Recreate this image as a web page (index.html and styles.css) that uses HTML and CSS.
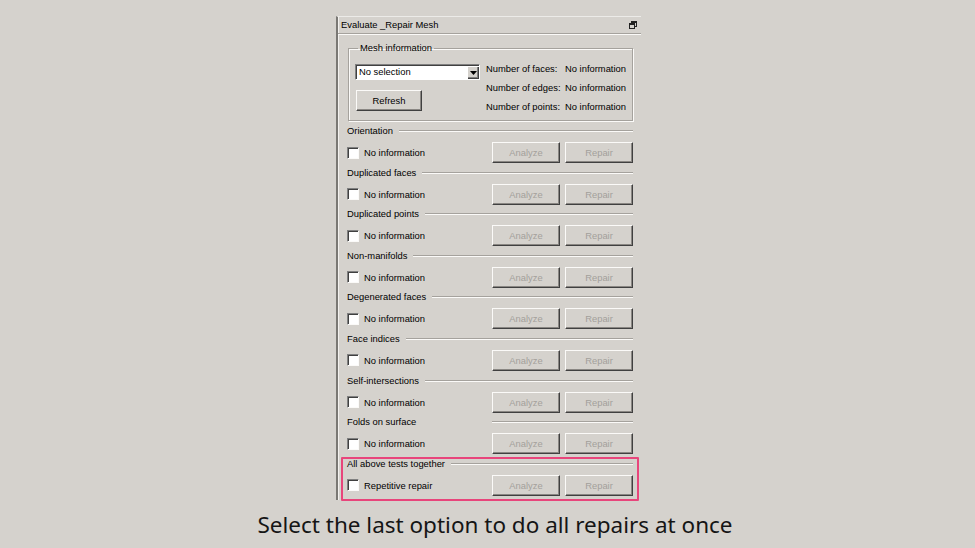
FILE: index.html
```html
<!DOCTYPE html>
<html lang="en">
<head>
    <meta charset="UTF-8">
    <meta name="viewport" content="width=device-width, initial-scale=1.0">
    <title>Evaluate Repair Mesh</title>
    <link rel="stylesheet" href="styles.css">
</head>
<body>
    <div class="panel">
        <div class="panel-title">
            <span>Evaluate _Repair Mesh</span>
            <svg class="restore-icon" width="8" height="8" viewBox="0 0 8 8">
                <rect x="2.5" y="0.5" width="5" height="5" fill="none" stroke="#222"/>
                <rect x="2.5" y="0.5" width="5" height="1.5" fill="#222"/>
                <rect x="0.5" y="2.5" width="5" height="5" fill="#d5d2cd" stroke="#222"/>
                <rect x="0.5" y="2.5" width="5" height="1.5" fill="#222"/>
            </svg>
        </div>

        <div class="panel-body">
            <fieldset class="group">
                <legend>Mesh information</legend>
                <div class="mesh-info">
                    <div class="mesh-left">
                        <div class="combo">
                            <span class="combo-text">No selection</span>
                            <span class="combo-arrow">
                                <svg width="7" height="4" viewBox="0 0 7 4"><path d="M0 0h7L3.5 4z" fill="#000"/></svg>
                            </span>
                        </div>
                        <button class="btn btn-refresh">Refresh</button>
                    </div>
                    <div class="mesh-stats">
                        <span>Number of faces:</span><span>No information</span>
                        <span>Number of edges:</span><span>No information</span>
                        <span>Number of points:</span><span>No information</span>
                    </div>
                </div>
            </fieldset>

            <div class="section">
                <div class="section-label"><span>Orientation</span><i class="rule"></i></div>
                <div class="section-row">
                    <label class="check"><span class="box"></span>No information</label>
                    <button class="btn" disabled>Analyze</button>
                    <button class="btn" disabled>Repair</button>
                </div>
            </div>

            <div class="section">
                <div class="section-label"><span>Duplicated faces</span><i class="rule"></i></div>
                <div class="section-row">
                    <label class="check"><span class="box"></span>No information</label>
                    <button class="btn" disabled>Analyze</button>
                    <button class="btn" disabled>Repair</button>
                </div>
            </div>

            <div class="section">
                <div class="section-label"><span>Duplicated points</span><i class="rule"></i></div>
                <div class="section-row">
                    <label class="check"><span class="box"></span>No information</label>
                    <button class="btn" disabled>Analyze</button>
                    <button class="btn" disabled>Repair</button>
                </div>
            </div>

            <div class="section">
                <div class="section-label"><span>Non-manifolds</span><i class="rule"></i></div>
                <div class="section-row">
                    <label class="check"><span class="box"></span>No information</label>
                    <button class="btn" disabled>Analyze</button>
                    <button class="btn" disabled>Repair</button>
                </div>
            </div>

            <div class="section">
                <div class="section-label"><span>Degenerated faces</span><i class="rule"></i></div>
                <div class="section-row">
                    <label class="check"><span class="box"></span>No information</label>
                    <button class="btn" disabled>Analyze</button>
                    <button class="btn" disabled>Repair</button>
                </div>
            </div>

            <div class="section">
                <div class="section-label"><span>Face indices</span><i class="rule"></i></div>
                <div class="section-row">
                    <label class="check"><span class="box"></span>No information</label>
                    <button class="btn" disabled>Analyze</button>
                    <button class="btn" disabled>Repair</button>
                </div>
            </div>

            <div class="section">
                <div class="section-label"><span>Self-intersections</span><i class="rule"></i></div>
                <div class="section-row">
                    <label class="check"><span class="box"></span>No information</label>
                    <button class="btn" disabled>Analyze</button>
                    <button class="btn" disabled>Repair</button>
                </div>
            </div>

            <div class="section">
                <div class="section-label"><span>Folds on surface</span><i class="rule rule-short"></i></div>
                <div class="section-row">
                    <label class="check"><span class="box"></span>No information</label>
                    <button class="btn" disabled>Analyze</button>
                    <button class="btn" disabled>Repair</button>
                </div>
            </div>

            <div class="section section-highlight">
                <div class="section-label"><span>All above tests together</span><i class="rule"></i></div>
                <div class="section-row">
                    <label class="check"><span class="box"></span>Repetitive repair</label>
                    <button class="btn" disabled>Analyze</button>
                    <button class="btn" disabled>Repair</button>
                </div>
            </div>
        </div>
    </div>

    <p class="caption">Select the last option to do all repairs at once</p>
</body>
</html>
```

FILE: styles.css
```css
body {
    margin: 0;
    background: #d5d2cd;
    font-family: "Liberation Sans", Arial, sans-serif;
    color: #000;
}

/* dialog panel */
.panel {
    width: 303px;
    margin: 16px 0 0 336px;
    border-top: 1px solid #ecebe8;
    border-left: 2px solid #7a7874;
    box-shadow: inset 1px 0 0 #f3f1ee;
    font-size: 9.4px;
}

.panel-title {
    display: flex;
    justify-content: space-between;
    align-items: center;
    height: 16px;
    line-height: 16px;
    padding: 0 4px 0 3px;
    border-bottom: 1px solid #a5a29d;
    box-shadow: 0 1px 0 #fbfaf8;
}

.restore-icon {
    display: block;
}

.panel-body {
    padding: 0 8px 0.6px 9px;
}

/* mesh information group */
.group {
    margin: 8px 0 4px 1px;
    padding: 5px 6px 4px 6px;
    border: 1px solid #a5a29d;
    box-shadow: inset 1px 1px 0 #fbfaf8, 1px 1px 0 #fbfaf8;
    min-width: 0;
}

.group legend {
    padding: 0 2px;
    margin-left: 3px;
    line-height: 12px;
}

.mesh-info {
    display: flex;
    gap: 6px;
}

.mesh-left {
    width: 125px;
}

.combo {
    display: flex;
    align-items: center;
    justify-content: space-between;
    height: 16px;
    margin-top: 5px;
    box-sizing: border-box;
    background: #fff;
    border-top: 1px solid #808080;
    border-left: 1px solid #808080;
    border-right: 1px solid #fff;
    border-bottom: 1px solid #fff;
    box-shadow: inset 1px 1px 0 #404040;
    padding: 0 1px 0 3px;
}

.combo-text {
    line-height: 14px;
}

.combo-arrow {
    display: flex;
    align-items: center;
    justify-content: center;
    width: 11px;
    height: 12px;
    background: #d5d2cd;
    border-top: 1px solid #fff;
    border-left: 1px solid #fff;
    box-shadow: 1px 1px 0 #404040, inset -1px -1px 0 #808080;
    box-sizing: border-box;
}

.mesh-stats {
    display: grid;
    grid-template-columns: 79px auto;
    line-height: 19px;
}

/* buttons */
.btn {
    width: 68px;
    height: 21px;
    padding: 0;
    background: #d5d2cd;
    font-family: inherit;
    font-size: 9.4px;
    color: #000;
    border: 1px solid;
    border-color: #fbfaf8 #404040 #404040 #fbfaf8;
    box-shadow: inset -1px -1px 0 #8a8783;
}

.btn:disabled {
    color: #a3a09b;
}

.btn-refresh {
    display: block;
    width: 66px;
    margin: 10px 0 0 1px;
}

/* test sections */
.section {
    margin-bottom: 3.6px;
}

.section-label {
    display: flex;
    align-items: center;
    height: 12px;
    line-height: 12px;
}

.rule {
    flex: 1;
    margin-left: 6px;
    border-top: 1px solid #a5a29d;
    border-bottom: 1px solid #fbfaf8;
}

.rule-short {
    flex: 0 0 141px;
    margin-left: auto;
}

.section-row {
    display: flex;
    align-items: center;
    gap: 5px;
    margin-top: 5px;
}

.check {
    display: flex;
    align-items: center;
    gap: 5px;
    flex: 1;
}

.box {
    width: 12px;
    height: 12px;
    box-sizing: border-box;
    background: #fff;
    border-top: 1px solid #808080;
    border-left: 1px solid #808080;
    border-right: 1px solid #fbfaf8;
    border-bottom: 1px solid #fbfaf8;
    box-shadow: inset 1px 1px 0 #404040;
}

.section-highlight {
    position: relative;
}

.section-highlight::after {
    content: "";
    position: absolute;
    top: -1px;
    left: -6px;
    right: -6px;
    bottom: -5px;
    border: 2px solid #e8457b;
    border-radius: 1px;
    pointer-events: none;
}

/* video caption */
.caption {
    margin: 10px 0 0;
    padding-left: 15px;
    text-align: center;
    font-family: "Noto Sans", "Open Sans", sans-serif;
    font-size: 22.5px;
    line-height: 30px;
    color: #151515;
}
```
